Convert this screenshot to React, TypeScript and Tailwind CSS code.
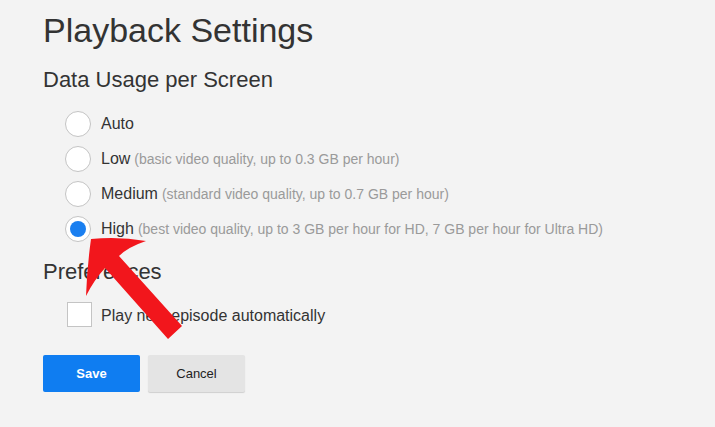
import React from "react";

const options = [
  { label: "Auto", note: "" },
  { label: "Low", note: "(basic video quality, up to 0.3 GB per hour)" },
  { label: "Medium", note: "(standard video quality, up to 0.7 GB per hour)" },
  { label: "High", note: "(best video quality, up to 3 GB per hour for HD, 7 GB per hour for Ultra HD)" },
];

function Radio({ checked }: { checked: boolean }) {
  return (
    <span className="flex h-[26px] w-[26px] shrink-0 items-center justify-center rounded-full border border-[#c4c4c4] bg-white">
      {checked && <span className="h-4 w-4 rounded-full bg-[#1a7ff0]" />}
    </span>
  );
}

function Arrow() {
  return (
    <svg className="pointer-events-none absolute inset-0" width="715" height="427" viewBox="0 0 715 427">
      <path
        d="M91 239 Q118 236 146 241 Q128 247 119 256 L182 326 L168 339 L105 268 Q94 280 86 296 Q87 268 91 239 Z"
        fill="#f2161c"
      />
    </svg>
  );
}

export default function App() {
  return (
    <div className="relative h-[427px] w-[715px] overflow-hidden bg-[#f3f3f3] px-[43px] pt-[10px] font-['Liberation_Sans',Arial,sans-serif] text-[#333]">
      <h1 className="text-[34px] leading-[40px]">Playback Settings</h1>
      <h2 className="mt-4 text-[22px] leading-[28px]">Data Usage per Screen</h2>

      <div className="mt-3 flex flex-col pl-[22px]">
        {options.map((o, i) => (
          <div key={o.label} className="flex h-[35px] items-center gap-[10px]">
            <Radio checked={i === 3} />
            <span className="text-[16px] leading-5">
              {o.label}
              {o.note && <span className="ml-[4px] text-[14px] text-[#9a9a9a]">{o.note}</span>}
            </span>
          </div>
        ))}
      </div>

      <h2 className="mt-3 text-[22px] leading-[28px]">Preferences</h2>
      <div className="mt-[11px] flex h-[35px] items-center gap-[9px] pl-6">
        <span className="h-[25px] w-[25px] shrink-0 border border-[#c4c4c4] bg-white" />
        <span className="mt-[3px] text-[16px] leading-5">Play next episode automatically</span>
      </div>

      <div className="mt-[23px] flex gap-[8px]">
        <button className="h-[37px] w-[97px] rounded-[2px] bg-[#0f7df1] text-[13px] font-bold text-white">Save</button>
        <button className="h-[37px] w-[97px] rounded-[2px] bg-[#e4e4e4] text-[13px] text-[#222] shadow-[0_1px_1px_rgba(0,0,0,0.15)]">
          Cancel
        </button>
      </div>

      <Arrow />
    </div>
  );
}
